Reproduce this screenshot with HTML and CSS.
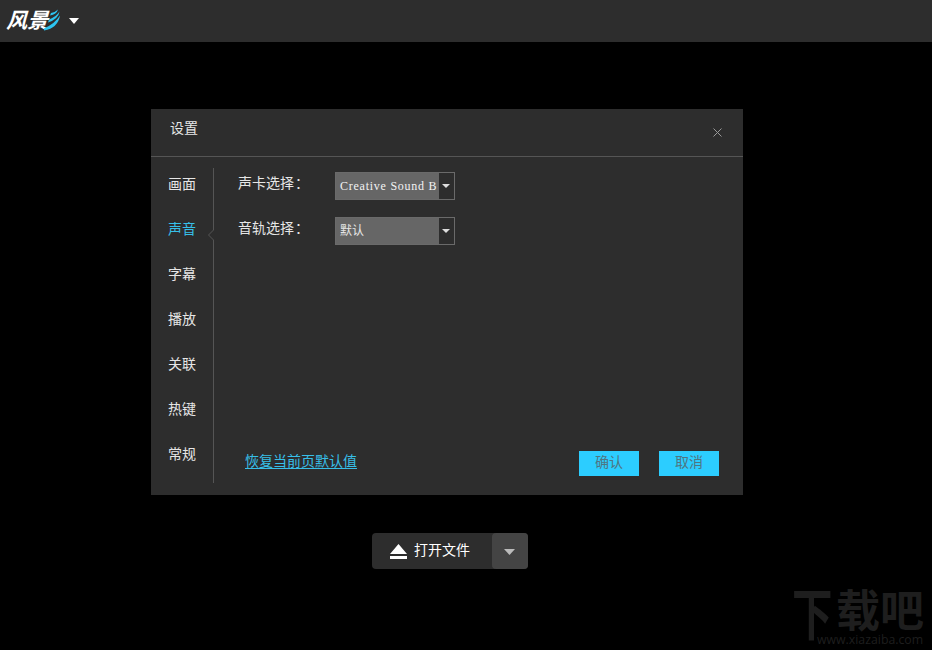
FILE: index.html
```
<!DOCTYPE html>
<html lang="zh-CN">
<head>
    <meta charset="UTF-8">
    <title>风影</title>
    <link rel="stylesheet" href="styles.css">
</head>
<body>
    <div class="topbar">
        <div class="logo">
            <span class="logo-text">风</span><span class="logo-text logo-second">景</span>
            <svg class="logo-wave" width="17" height="22" viewBox="0 0 17 22">
                <path d="M7 4Q11 3.500 14 0.500Q12.500 5.500 6 6.500Z"/>
                <path d="M5 10.500Q12 8 15.500 2.500Q14.500 10 4 13.500Z"/>
                <path d="M0 19.500Q11 14.500 16 6.500Q14 19 0 21.500Z"/>
            </svg>
        </div>
        <svg class="logo-arrow" width="10" height="6"><path d="M0 0H10L5 6Z"/></svg>
    </div>

    <div class="dialog">
        <div class="dialog-header">
            <span class="title">设置</span>
            <svg class="close" width="9" height="9"><path d="M0.500 0.500L8.500 8.500M8.500 0.500L0.500 8.500"/></svg>
        </div>
        <div class="dialog-body">
            <div class="nav">
                <div class="nav-item">画面</div>
                <div class="nav-item active">声音
                    <svg class="notch" width="8" height="12"><path class="cover" d="M6 1H8V11H6Z"/><path class="edge" d="M6.500 0V1L1.500 6L6.500 11V12"/></svg>
                </div>
                <div class="nav-item">字幕</div>
                <div class="nav-item">播放</div>
                <div class="nav-item">关联</div>
                <div class="nav-item">热键</div>
                <div class="nav-item">常规</div>
            </div>
            <div class="content">
                <div class="row">
                    <div class="label"><span>声卡选择</span><span class="colon">：</span></div>
                    <div class="select">
                        <div class="value latin">Creative Sound B</div>
                        <div class="drop"><svg width="8" height="4"><path d="M0 0H8L4 4Z"/></svg></div>
                    </div>
                </div>
                <div class="row">
                    <div class="label"><span>音轨选择</span><span class="colon">：</span></div>
                    <div class="select">
                        <div class="value">默认</div>
                        <div class="drop"><svg width="8" height="4"><path d="M0 0H8L4 4Z"/></svg></div>
                    </div>
                </div>
                <div class="footer">
                    <a class="restore">恢复当前页默认值</a>
                    <div class="button">确认</div>
                    <div class="button">取消</div>
                </div>
            </div>
        </div>
    </div>

    <div class="open-file">
        <div class="open-main">
            <svg width="18" height="16"><path d="M8.500 0L17 10H0ZM0 12H17V15H0Z"/></svg>
            <span>打开文件</span>
        </div>
        <div class="open-more"><svg width="11" height="6"><path d="M0 0H11L5.500 6Z"/></svg></div>
    </div>

    <div class="watermark">
        <span class="mark mark-down">下</span><span class="mark">载</span><span class="mark">吧</span>
        <div class="mark-url">www.xiazaiba.com</div>
    </div>
</body>
</html>
```
FILE: styles.css
```
body {
    background-color: #000;
    color: #e6e6e6;
    font-family: "Liberation Sans", "Noto Sans CJK SC", sans-serif;
    font-size: 14px;
    height: 650px;
    margin: 0;
    overflow: hidden;
    position: relative;
}
svg {
    display: block;
}
.topbar {
    align-items: center;
    background-color: #2d2d2d;
    display: flex;
    height: 42px;
}
.logo {
    display: flex;
    height: 42px;
    position: relative;
    width: 69px;
}
.logo-text {
    color: #fff;
    font-size: 21px;
    font-weight: bold;
    line-height: 42px;
    margin-left: 8px;
    transform: skewX(-16deg);
}
.logo-second {
    margin-left: 0;
}
.logo-wave {
    fill: #2cc4f0;
    left: 44px;
    position: absolute;
    top: 9px;
}
.logo-arrow {
    fill: #fff;
    margin-top: -1px;
}
.dialog {
    background-color: #2d2d2d;
    height: 386px;
    margin: 67px 0 0 151px;
    width: 592px;
}
.dialog-header {
    align-items: center;
    border-bottom: 1px solid #555;
    display: flex;
    height: 47px;
    justify-content: space-between;
}
.title {
    line-height: 20px;
    margin: -10px 0 0 19px;
}
.close {
    fill: none;
    margin: -1px 21px 0 0;
    stroke: #999;
}
.dialog-body {
    display: flex;
    height: 338px;
}
.nav {
    border-right: 1px solid #555;
    box-sizing: border-box;
    height: 315px;
    margin-top: 11px;
    width: 63px;
}
.nav-item {
    height: 45px;
    line-height: 32px;
    padding-left: 17px;
    position: relative;
}
.active {
    color: #37bfe8;
}
.notch {
    fill: none;
    position: absolute;
    right: -2px;
    top: 16px;
}
.cover {
    fill: #2d2d2d;
}
.edge {
    stroke: #555;
}
.content {
    flex: 1;
    padding: 15px 24px 0 24px;
}
.row {
    display: flex;
    height: 45px;
}
.label {
    display: flex;
    line-height: 22px;
    width: 97px;
}
.colon {
    font-feature-settings: "halt";
    margin-left: 1px;
}
.select {
    background-color: #666;
    border: 1px solid #6a6a6a;
    box-sizing: border-box;
    display: flex;
    height: 28px;
    width: 120px;
}
.value {
    flex: 1;
    font-size: 12px;
    line-height: 26px;
    overflow: hidden;
    padding-left: 4px;
    white-space: nowrap;
}
.latin {
    color: #f2f2f2;
    font-family: "Liberation Serif", serif;
    letter-spacing: 0.75px;
    line-height: 27px;
}
.drop {
    align-items: center;
    background-color: #2d2d2d;
    box-sizing: border-box;
    display: flex;
    fill: #ddd;
    justify-content: center;
    padding-right: 2px;
    width: 15px;
}
.footer {
    display: flex;
    padding: 189px 0 0 7px;
}
.restore {
    color: #37bfe8;
    flex: 1;
    line-height: 20px;
    text-decoration: underline;
    text-underline-offset: 2px;
}
.button {
    background-color: #2ccdff;
    color: #4f7581;
    height: 25px;
    line-height: 23px;
    margin-left: 20px;
    text-align: center;
    width: 60px;
}
.open-file {
    background-color: #2d2d2d;
    border-radius: 4px;
    display: flex;
    height: 36px;
    margin: 38px 0 0 372px;
    width: 156px;
}
.open-main {
    align-items: center;
    color: #fff;
    display: flex;
    fill: #fff;
    gap: 6px;
    padding-left: 18px;
    width: 102px;
}
.open-main svg {
    margin-top: 1px;
}
.open-main span {
    line-height: 20px;
    margin-top: -2px;
}
.open-more {
    align-items: center;
    background-color: #444;
    border-radius: 4px;
    box-sizing: border-box;
    display: flex;
    fill: #bbb;
    justify-content: center;
    padding: 1px 1px 0 0;
    width: 36px;
}
.watermark {
    color: #1e1e1e;
    display: flex;
    left: 792px;
    position: absolute;
    top: 587px;
}
.mark {
    font-size: 44px;
    font-weight: bold;
    line-height: 50px;
}
.mark-down {
    transform: scale(0.92, 1.3);
    transform-origin: 0 12px;
}
.mark-url {
    font-family: "Open Sans", sans-serif;
    font-size: 12.3px;
    left: 25px;
    line-height: 16px;
    position: absolute;
    top: 45px;
}
```
